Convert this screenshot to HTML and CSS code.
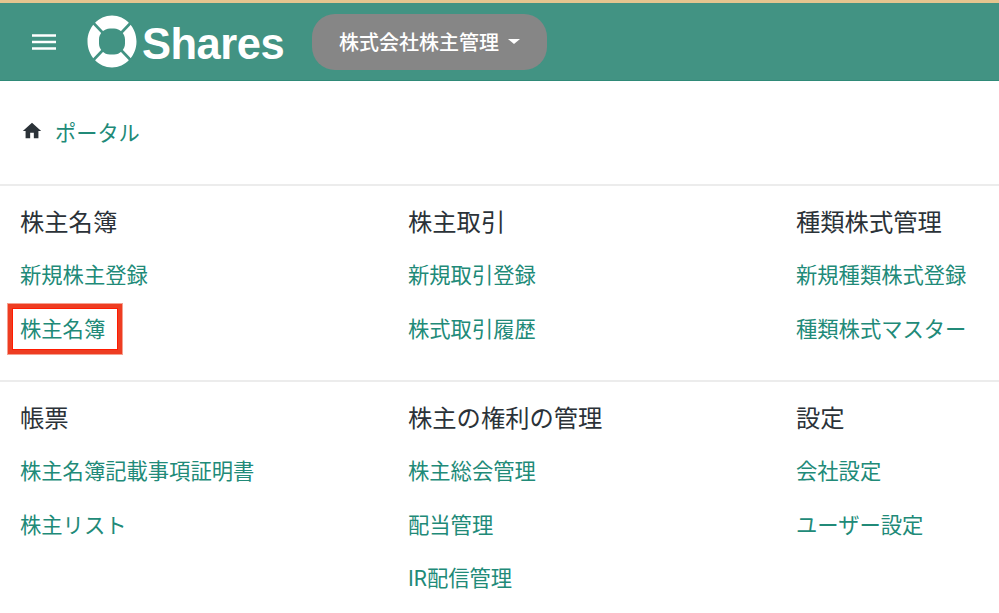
FILE: index.html
```html
<!DOCTYPE html>
<html lang="ja">
<head>
<meta charset="utf-8">
<title>Shares</title>
<link rel="stylesheet" href="styles.css">
</head>
<body>
<header class="topbar">
  <svg class="menu-icon" width="24" height="16" viewBox="0 0 24 16" aria-hidden="true"><path d="M0 1.500h24M0 8h24M0 14.500h24" stroke="#fff" stroke-width="2.500" fill="none"/></svg>
  <div class="brand">
    <svg class="brand-mark" width="50" height="53" viewBox="0 0 50 53" aria-hidden="true">
      <path fill="#fff" fill-rule="evenodd" d="M25 .5C38.500.5 49.500 12.200 49.500 26.500S38.500 52.500 25 52.500.5 40.800.5 26.500 11.500.5 25 .5zM23 13.500c-6 0-11 5-11 11v4c0 6 5 11 11 11h4c6 0 11-5 11-11v-4c0-6-5-11-11-11z"/>
      <path d="M5 6.500l10.500 11M45 6.500l-10.500 11M5 46.500l10.500-11M45 46.500l-10.500-11" stroke="#429383" stroke-width="2.600" fill="none"/>
    </svg>
    <span class="brand-name">Shares</span>
  </div>
  <button class="company"><span>株式会社株主管理</span><i class="caret"></i></button>
</header>
<nav class="crumb">
  <svg class="home" width="22" height="22" viewBox="0 0 24 24" aria-hidden="true"><path d="M10 20v-6h4v6h5v-8h3L12 3 2 12h3v8z" fill="#2b3238"/></svg>
  <a href="#">ポータル</a>
</nav>
<section class="row">
  <div class="col col-a"><h2>株主名簿</h2><a href="#">新規株主登録</a><a href="#" class="marked">株主名簿</a></div>
  <div class="col col-b"><h2>株主取引</h2><a href="#">新規取引登録</a><a href="#">株式取引履歴</a></div>
  <div class="col col-c"><h2>種類株式管理</h2><a href="#">新規種類株式登録</a><a href="#">種類株式マスター</a></div>
</section>
<section class="row">
  <div class="col col-a"><h2>帳票</h2><a href="#">株主名簿記載事項証明書</a><a href="#">株主リスト</a></div>
  <div class="col col-b"><h2>株主の権利の管理</h2><a href="#">株主総会管理</a><a href="#">配当管理</a><a href="#">IR配信管理</a></div>
  <div class="col col-c"><h2>設定</h2><a href="#">会社設定</a><a href="#">ユーザー設定</a></div>
</section>
</body>
</html>
```
FILE: styles.css
```css
* { box-sizing: border-box; }
html, body { margin: 0; height: 613px; overflow: hidden; }
body {
  background: #fff;
  color: #2b3238;
  font-family: "Roboto", "Noto Sans CJK JP", sans-serif;
}
a { color: #218a78; text-decoration: none; }
.topbar {
  height: 81px;
  display: flex;
  align-items: center;
  background: #429383;
  border-top: 3px solid #e5c58f;
  border-bottom: 1px solid #2f8a78;
  padding-left: 32px;
}
.menu-icon { flex: none; }
.brand { display: flex; align-items: center; margin-left: 31px; }
.brand-mark { flex: none; }
.brand-name {
  font-family: "Liberation Sans", sans-serif;
  font-weight: 700;
  font-size: 43.500px;
  line-height: 50px;
  color: #fff;
  margin-left: 5px;
  padding-top: 4px;
  letter-spacing: -0.5px;
}
.company {
  display: flex;
  align-items: center;
  gap: 9px;
  height: 56px;
  margin-left: 28px;
  padding: 0 27px;
  background: #868686;
  color: #fff;
  border: 0;
  border-radius: 23px;
  font: 500 20px "Roboto", "Noto Sans CJK JP", sans-serif;
}
.caret {
  width: 0; height: 0;
  border-left: 6px solid transparent;
  border-right: 6px solid transparent;
  border-top: 5px solid #fff;
}
.crumb {
  height: 103px;
  display: flex;
  align-items: center;
  gap: 12px;
  padding: 0 0 3px 21px;
  font-size: 21.200px;
}
.home { flex: none; }
.row {
  display: flex;
  height: 196px;
  border-top: 2px solid #ececec;
  padding: 19px 0 0 20px;
}
.col { display: flex; flex-direction: column; align-items: flex-start; }
.col-a, .col-b { width: 388px; }
.col-c { flex: 1; }
h2 {
  margin: 0 0 17px;
  font-size: 24.300px;
  line-height: 36px;
  font-weight: 400;
  color: #2b3238;
}
.col a {
  font-size: 21.300px;
  line-height: 36px;
  height: 36px;
  margin-bottom: 17.500px;
}
.marked { position: relative; }
.marked::after {
  content: "";
  position: absolute;
  left: -12px; right: -17px; top: -8px; bottom: -6px;
  border: 4px solid #ee3d22;
  box-shadow: 0 0 0 1px #f5a090, inset 0 0 0 1px #ff1a00;
  pointer-events: none;
}
```
